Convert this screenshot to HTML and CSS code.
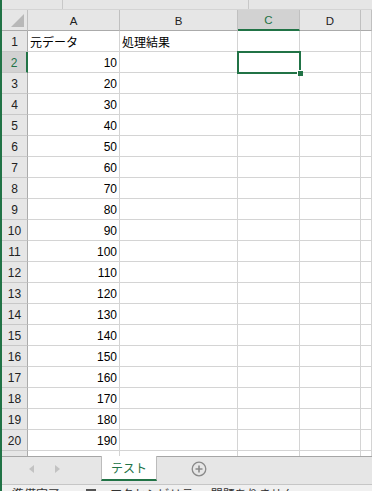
FILE: index.html
```html
<!DOCTYPE html>
<html lang="ja">
  <head>
    <meta charset="UTF-8" />
    <meta name="viewport" content="width=device-width, initial-scale=1.0" />
    <title>Book1 - Excel</title>
    <link rel="stylesheet" href="styles.css">
  </head>
  <body>
    <div class="app">
      <div class="formula-bar">
        <div class="name-box"></div>
        <div class="fx-box"></div>
        <div class="input-box"></div>
      </div>

      <div class="sheet">
        <div class="row header-row">
          <div class="cell corner"><span class="corner-mark"></span></div>
          <div class="cell col-head">A</div>
          <div class="cell col-head">B</div>
          <div class="cell col-head selected">C</div>
          <div class="cell col-head">D</div>
          <div class="cell col-head"></div>
        </div>
        <div class="row">
          <div class="cell row-head">1</div>
          <div class="cell text">元データ</div>
          <div class="cell text">処理結果</div>
          <div class="cell"></div>
          <div class="cell"></div>
          <div class="cell"></div>
        </div>
        <div class="row">
          <div class="cell row-head selected">2</div>
          <div class="cell num">10</div>
          <div class="cell"></div>
          <div class="cell active"><span class="fill-handle"></span></div>
          <div class="cell"></div>
          <div class="cell"></div>
        </div>
        <div class="row">
          <div class="cell row-head">3</div>
          <div class="cell num">20</div>
          <div class="cell"></div><div class="cell"></div><div class="cell"></div><div class="cell"></div>
        </div>
        <div class="row">
          <div class="cell row-head">4</div>
          <div class="cell num">30</div>
          <div class="cell"></div><div class="cell"></div><div class="cell"></div><div class="cell"></div>
        </div>
        <div class="row">
          <div class="cell row-head">5</div>
          <div class="cell num">40</div>
          <div class="cell"></div><div class="cell"></div><div class="cell"></div><div class="cell"></div>
        </div>
        <div class="row">
          <div class="cell row-head">6</div>
          <div class="cell num">50</div>
          <div class="cell"></div><div class="cell"></div><div class="cell"></div><div class="cell"></div>
        </div>
        <div class="row">
          <div class="cell row-head">7</div>
          <div class="cell num">60</div>
          <div class="cell"></div><div class="cell"></div><div class="cell"></div><div class="cell"></div>
        </div>
        <div class="row">
          <div class="cell row-head">8</div>
          <div class="cell num">70</div>
          <div class="cell"></div><div class="cell"></div><div class="cell"></div><div class="cell"></div>
        </div>
        <div class="row">
          <div class="cell row-head">9</div>
          <div class="cell num">80</div>
          <div class="cell"></div><div class="cell"></div><div class="cell"></div><div class="cell"></div>
        </div>
        <div class="row">
          <div class="cell row-head">10</div>
          <div class="cell num">90</div>
          <div class="cell"></div><div class="cell"></div><div class="cell"></div><div class="cell"></div>
        </div>
        <div class="row">
          <div class="cell row-head">11</div>
          <div class="cell num">100</div>
          <div class="cell"></div><div class="cell"></div><div class="cell"></div><div class="cell"></div>
        </div>
        <div class="row">
          <div class="cell row-head">12</div>
          <div class="cell num">110</div>
          <div class="cell"></div><div class="cell"></div><div class="cell"></div><div class="cell"></div>
        </div>
        <div class="row">
          <div class="cell row-head">13</div>
          <div class="cell num">120</div>
          <div class="cell"></div><div class="cell"></div><div class="cell"></div><div class="cell"></div>
        </div>
        <div class="row">
          <div class="cell row-head">14</div>
          <div class="cell num">130</div>
          <div class="cell"></div><div class="cell"></div><div class="cell"></div><div class="cell"></div>
        </div>
        <div class="row">
          <div class="cell row-head">15</div>
          <div class="cell num">140</div>
          <div class="cell"></div><div class="cell"></div><div class="cell"></div><div class="cell"></div>
        </div>
        <div class="row">
          <div class="cell row-head">16</div>
          <div class="cell num">150</div>
          <div class="cell"></div><div class="cell"></div><div class="cell"></div><div class="cell"></div>
        </div>
        <div class="row">
          <div class="cell row-head">17</div>
          <div class="cell num">160</div>
          <div class="cell"></div><div class="cell"></div><div class="cell"></div><div class="cell"></div>
        </div>
        <div class="row">
          <div class="cell row-head">18</div>
          <div class="cell num">170</div>
          <div class="cell"></div><div class="cell"></div><div class="cell"></div><div class="cell"></div>
        </div>
        <div class="row">
          <div class="cell row-head">19</div>
          <div class="cell num">180</div>
          <div class="cell"></div><div class="cell"></div><div class="cell"></div><div class="cell"></div>
        </div>
        <div class="row">
          <div class="cell row-head">20</div>
          <div class="cell num">190</div>
          <div class="cell"></div><div class="cell"></div><div class="cell"></div><div class="cell"></div>
        </div>
        <div class="row">
          <div class="cell row-head"></div>
          <div class="cell"></div>
          <div class="cell"></div><div class="cell"></div><div class="cell"></div><div class="cell"></div>
        </div>
      </div>

      <div class="tab-bar">
        <div class="tab-nav">
          <span class="arrow arrow-left"></span>
          <span class="arrow arrow-right"></span>
        </div>
        <div class="tab active-tab">テスト</div>
        <div class="add-sheet">
          <svg width="16" height="16" viewBox="0 0 16 16">
            <circle cx="8" cy="8" r="6.8" fill="none" stroke="#8a8a8a" stroke-width="1.3" />
            <path d="M8 4.5v7M4.5 8h7" stroke="#8a8a8a" stroke-width="1.6" />
          </svg>
        </div>
      </div>

      <div class="status-bar">
        <span class="status-ready">準備完了</span>
        <span class="status-icon"></span>
        <span class="status-access">アクセシビリティ: 問題ありません</span>
      </div>
    </div>
  </body>
</html>
```

FILE: styles.css
```css
* {
  margin: 0;
  padding: 0;
  box-sizing: border-box;
}

body {
  width: 372px;
  height: 491px;
  overflow: hidden;
  background: #ffffff;
  font-family: "Liberation Sans", "Noto Sans CJK JP", sans-serif;
}

.app {
  display: flex;
  flex-direction: column;
  height: 491px;
  border-left: 2px solid #217346;
}

/* Formula bar (only its bottom edge is visible) */
.formula-bar {
  display: flex;
  height: 10px;
  background: #e6e6e6;
  border-bottom: 1px solid #d4d4d4;
}

.name-box {
  width: 61px;
  border-right: 1px solid #c8c8c8;
}

.fx-box {
  width: 186px;
  border-right: 1px solid #c8c8c8;
}

.input-box {
  flex: 1;
}

/* Grid */
.sheet {
  height: 446px;
  overflow: hidden;
  background: #ffffff;
}

.row {
  display: grid;
  grid-template-columns: 26px 92px 118px 62px 61px 1fr;
  height: 21px;
}

.cell {
  display: flex;
  align-items: center;
  padding: 1px 3px 0;
  border-right: 1px solid #d4d4d4;
  border-bottom: 1px solid #d4d4d4;
  font-size: 12px;
  color: #000000;
  white-space: nowrap;
}

.header-row .cell {
  background: #e6e6e6;
  border-right-color: #c0c0c0;
  border-bottom-color: #ababab;
}

.col-head {
  justify-content: center;
  font-size: 11.5px;
  color: #222222;
}

.col-head.selected {
  background: #d2d2d2 !important;
  color: #217346;
  border-bottom: 2px solid #217346 !important;
}

.corner {
  position: relative;
}

.corner-mark {
  position: absolute;
  right: 3px;
  bottom: 3px;
  width: 0;
  height: 0;
  border-left: 13px solid transparent;
  border-bottom: 13px solid #b8b8b8;
}

.row-head {
  justify-content: center;
  background: #e6e6e6;
  border-right-color: #ababab;
  border-bottom-color: #c8c8c8;
  font-size: 12px;
  color: #222222;
}

.row-head.selected {
  background: #d2d2d2;
  color: #217346;
  border-right: 2px solid #217346;
}

.text {
  font-family: "Noto Sans CJK JP", sans-serif;
  font-size: 12px;
  padding-left: 2px;
}

.num {
  justify-content: flex-end;
  padding-right: 2px;
}

/* Active cell C2 */
.active {
  position: relative;
}

.active::after {
  content: "";
  position: absolute;
  top: -1px;
  left: -1px;
  right: -2px;
  bottom: -2px;
  border: 2px solid #217346;
}

.fill-handle {
  position: absolute;
  right: -4px;
  bottom: -4px;
  width: 6px;
  height: 6px;
  background: #217346;
  border-top: 1px solid #ffffff;
  border-left: 1px solid #ffffff;
  z-index: 1;
}

/* Sheet tabs */
.tab-bar {
  display: flex;
  height: 29px;
  background: #e6e6e6;
  border-top: 1px solid #a6a6a6;
  border-bottom: 1px solid #c6c6c6;
}

.tab-nav {
  display: flex;
  align-items: center;
  gap: 21px;
  width: 99px;
  padding-left: 27px;
  padding-bottom: 3px;
}

.arrow {
  width: 0;
  height: 0;
  border-top: 4px solid transparent;
  border-bottom: 4px solid transparent;
}

.arrow-left {
  border-right: 5px solid #c2c2c2;
}

.arrow-right {
  border-left: 5px solid #c2c2c2;
}

.tab {
  display: flex;
  align-items: center;
  justify-content: center;
  width: 56px;
  height: 25px;
  margin-top: -1px;
  background: #ffffff;
  border-left: 1px solid #bcbcbc;
  border-right: 1px solid #bcbcbc;
  border-bottom: 2px solid #217346;
  font-family: "Noto Sans CJK JP", sans-serif;
  font-size: 12px;
  color: #217346;
}

.add-sheet {
  display: flex;
  align-items: center;
  padding-left: 34px;
  padding-bottom: 3px;
}

/* Status bar (cut off at the bottom) */
.status-bar {
  display: flex;
  align-items: flex-start;
  gap: 14px;
  flex: 1;
  overflow: hidden;
  background: #f0f0f0;
  padding: 2px 0 0 10px;
  font-family: "Noto Sans CJK JP", sans-serif;
  font-size: 12px;
  line-height: 14px;
  color: #333333;
}

.status-icon {
  width: 10px;
  height: 10px;
  margin: 2px 0 0 12px;
  background: #555555;
}
```
